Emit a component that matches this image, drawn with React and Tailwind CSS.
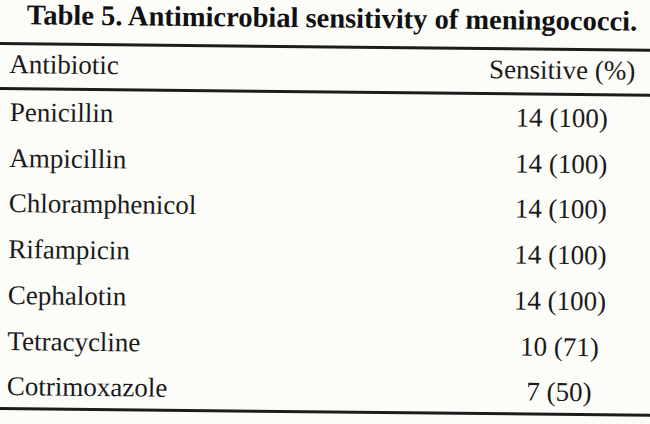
import React from "react";

const rows = [
  ["Penicillin", "14 (100)"],
  ["Ampicillin", "14 (100)"],
  ["Chloramphenicol", "14 (100)"],
  ["Rifampicin", "14 (100)"],
  ["Cephalotin", "14 (100)"],
  ["Tetracycline", "10 (71)"],
  ["Cotrimoxazole", "7 (50)"],
];

export default function App() {
  return (
    <div className="w-[650px] h-[424px] overflow-hidden bg-[#fcfcf9] text-[#1a1a1a] font-['Liberation_Serif','Times_New_Roman',serif]">
      <div className="w-[690px] origin-top-left rotate-[0.6deg]">
        <div className="pl-[27px] text-[28.5px] leading-[30px] font-bold text-[#111]">
          Table 5. Antimicrobial sensitivity of meningococci.
        </div>
        <div className="mt-[12px] h-[3px] bg-[#1c1c1c]" />
        <div className="flex text-[27px] leading-[38px] pb-[4px]">
          <div className="w-[478px] pl-[10px]">Antibiotic</div>
          <div className="w-[170px] text-center">Sensitive (%)</div>
        </div>
        <div className="h-[2.5px] bg-[#1c1c1c]" />
        <div className="mt-[0.5px] flex flex-col text-[27px] leading-[45.7px]">
          {rows.map(([name, val]) => (
            <div key={name} className="flex">
              <div className="w-[478px] pl-[11px]">{name}</div>
              <div className="w-[170px] text-center">{val}</div>
            </div>
          ))}
        </div>
        <div className="-mt-[3px] h-[3px] bg-[#1c1c1c]" />
      </div>
    </div>
  );
}
